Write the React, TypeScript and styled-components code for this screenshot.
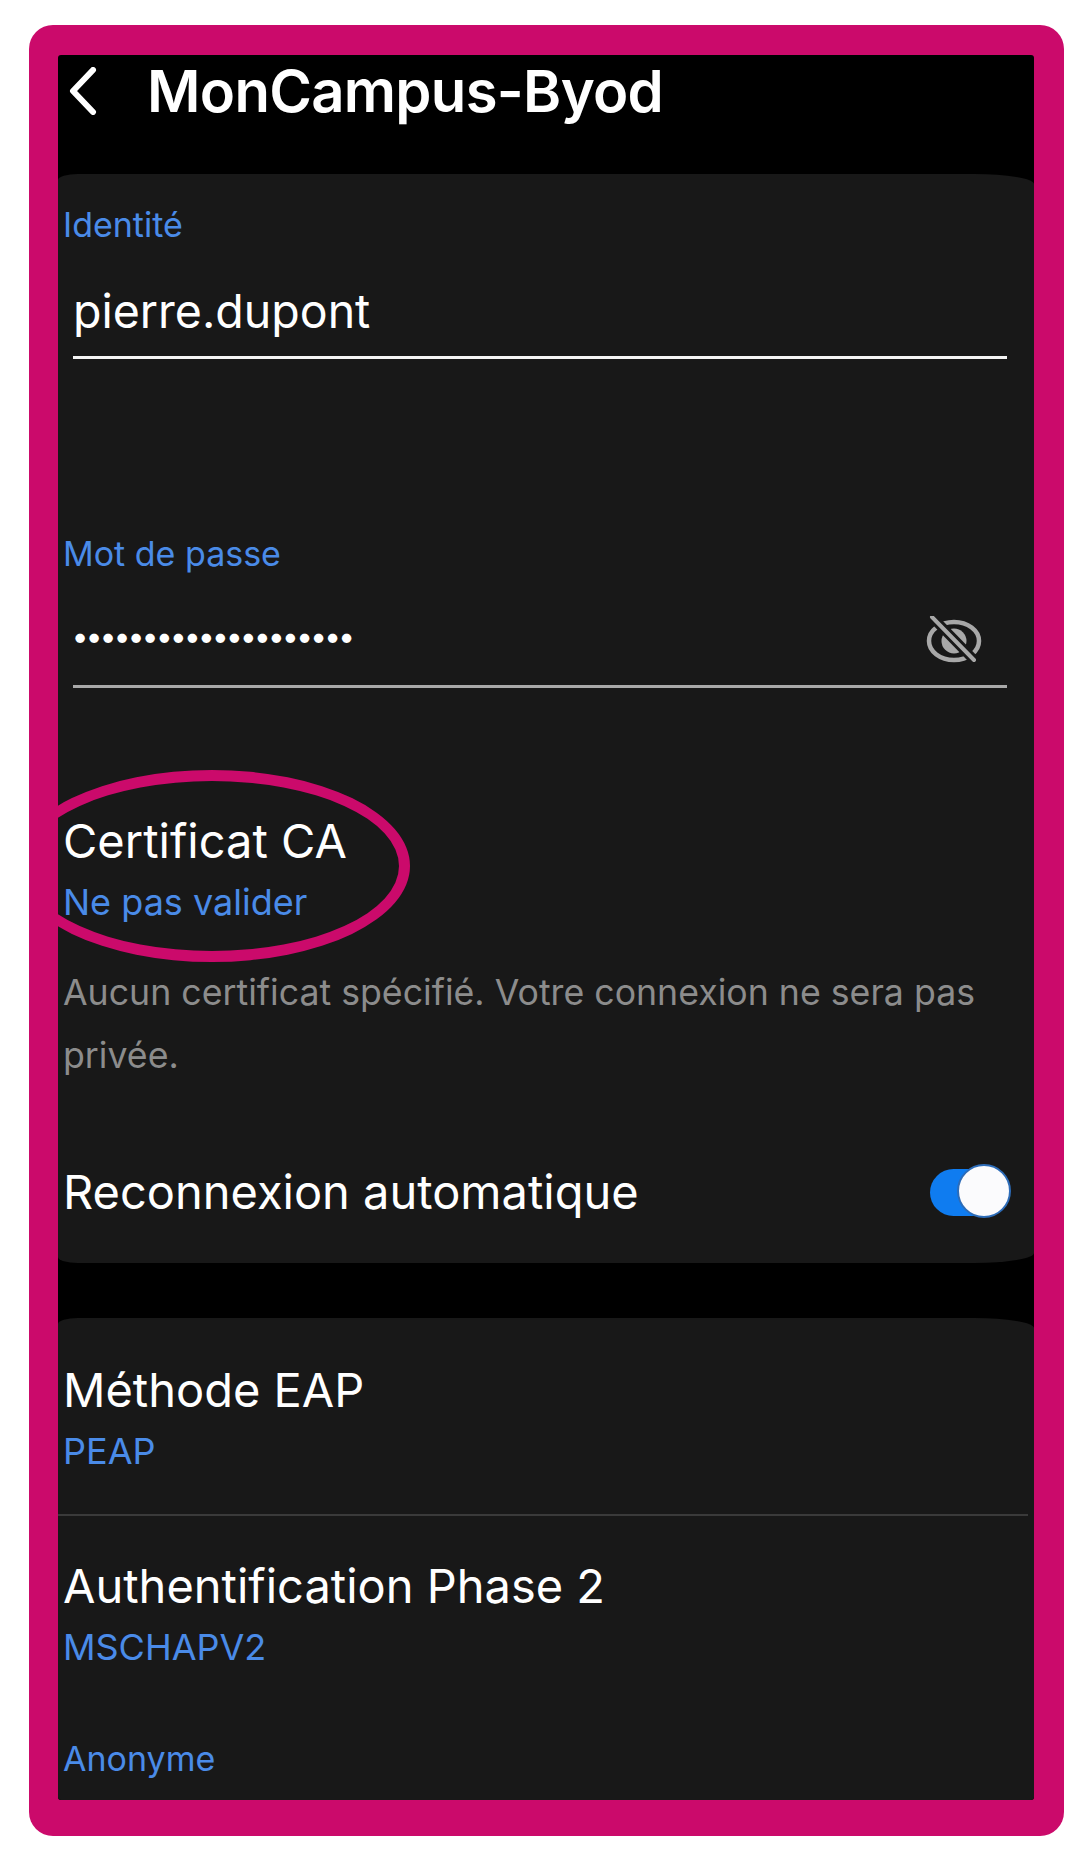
import styled, { createGlobalStyle } from "styled-components";

const GlobalStyle = createGlobalStyle`
  html, body {
    margin: 0;
    padding: 0;
    background: #ffffff;
  }
`;

const Page = styled.div`
  width: 1078px;
  height: 1859px;
  padding: 25px 14px 23px 29px;
  box-sizing: border-box;
`;

const Frame = styled.div`
  height: 100%;
  box-sizing: border-box;
  padding: 30px 30px 36px 29px;
  background: #cb0a6b;
  border-radius: 24px;
`;

const Screen = styled.div`
  position: relative;
  height: 100%;
  overflow: hidden;
  background: #000000;
  border-radius: 3px;
  font-family: Inter, Roboto, "Liberation Sans", sans-serif;
  color: #ffffff;
`;

const Header = styled.header`
  height: 119px;
  display: flex;
  align-items: flex-start;
  padding: 6px 0 0 10px;
  box-sizing: border-box;
`;

const BackIcon = styled.svg`
  width: 30px;
  height: 48px;
  margin-top: 6px;
  flex: none;
`;

const Title = styled.h1`
  margin: 0 0 0 49px;
  font-size: 58px;
  line-height: 60px;
  font-weight: 600;
  letter-spacing: -0.7px;
  white-space: nowrap;
`;

const Card = styled.section<{ $height: number }>`
  height: ${(p) => p.$height}px;
  box-sizing: border-box;
  background: #181818;
  border-radius: 20px 60px 60px 20px / 6px 10px 10px 6px;
  padding-left: 5px;
  overflow: hidden;
`;

const Gap = styled.div`
  height: 55px;
`;

const Label = styled.div<{ $top: number }>`
  margin-top: ${(p) => p.$top}px;
  height: 40px;
  font-size: 34px;
  line-height: 40px;
  color: #4a8be8;
`;

const InputRow = styled.div<{ $muted?: boolean }>`
  margin: 20px 27px 0 10px;
  height: 91px;
  display: flex;
  align-items: center;
  justify-content: space-between;
  border-bottom: 3px solid ${(p) => (p.$muted ? "#a8a8a8" : "#f4f4f4")};
  font-size: 46.5px;
  line-height: 56px;
`;

const Dots = styled.span`
  font-size: 30px;
  font-weight: 700;
  letter-spacing: -0.2px;
  margin-top: -8px;
`;

const EyeIcon = styled.svg`
  width: 56px;
  height: 48px;
  margin: 0 25px 0 0;
  flex: none;
`;

const Setting = styled.div<{ $top: number }>`
  margin-top: ${(p) => p.$top}px;
`;

const SettingName = styled.div`
  font-size: 47px;
  line-height: 56px;
`;

const SettingValue = styled.div`
  font-size: 36px;
  line-height: 44px;
  margin-top: 11px;
  color: #4a8be8;
`;

const Hint = styled.p`
  margin: 37px 25px 0 0;
  font-size: 35.7px;
  line-height: 63px;
  color: #8c8c8c;
`;

const ToggleRow = styled.div`
  margin: 77px 23px 0 0;
  display: flex;
  align-items: center;
  justify-content: space-between;
  font-size: 47px;
  line-height: 56px;
`;

const Track = styled.div`
  position: relative;
  width: 70px;
  height: 47px;
  margin-right: 11px;
  background: #0f7cf0;
  border-radius: 24px;
`;

const Knob = styled.div`
  position: absolute;
  top: -5px;
  right: -11px;
  width: 50px;
  height: 50px;
  background: #fbfbfd;
  border: 2px solid #2d6cb8;
  border-radius: 50%;
`;

const Divider = styled.hr`
  margin: 41px 6px 0 -5px;
  border: 0;
  height: 2px;
  background: #3a3a3a;
`;

const Highlight = styled.div`
  position: absolute;
  left: -44px;
  top: 715px;
  width: 396px;
  height: 192px;
  box-sizing: border-box;
  border: 11px solid #cb0a6b;
  border-radius: 50%;
  pointer-events: none;
`;

export default function App() {
  return (
    <>
      <GlobalStyle />
      <Page>
        <Frame>
          <Screen>
            <Header>
              <BackIcon viewBox="0 0 30 48" fill="none">
                <path
                  d="M25 3 L5 24 L25 45"
                  stroke="#ffffff"
                  strokeWidth="6"
                  strokeLinecap="round"
                  strokeLinejoin="round"
                />
              </BackIcon>
              <Title>MonCampus-Byod</Title>
            </Header>
            <Card $height={1089}>
              <Label $top={31}>Identité</Label>
              <InputRow>pierre.dupont</InputRow>
              <Label $top={175}>Mot de passe</Label>
              <InputRow $muted>
                <Dots>••••••••••••••••••••</Dots>
                <EyeIcon viewBox="0 0 56 48" fill="none">
                  <ellipse cx="28" cy="25" rx="25" ry="19" stroke="#a8a8a8" strokeWidth="4.5" />
                  <circle cx="28" cy="25" r="12.5" fill="#a8a8a8" />
                  <path d="M8 3 L50 46" stroke="#181818" strokeWidth="10" />
                  <path d="M6 1 L48 44" stroke="#a8a8a8" strokeWidth="4" strokeLinecap="round" />
                </EyeIcon>
              </InputRow>
              <Setting $top={125}>
                <SettingName>Certificat CA</SettingName>
                <SettingValue>Ne pas valider</SettingValue>
              </Setting>
              <Hint>Aucun certificat spécifié. Votre connexion ne sera pas privée.</Hint>
              <ToggleRow>
                Reconnexion automatique
                <Track>
                  <Knob />
                </Track>
              </ToggleRow>
            </Card>
            <Gap />
            <Card $height={500}>
              <Setting $top={44}>
                <SettingName>Méthode EAP</SettingName>
                <SettingValue>PEAP</SettingValue>
              </Setting>
              <Divider />
              <Setting $top={42}>
                <SettingName>Authentification Phase 2</SettingName>
                <SettingValue>MSCHAPV2</SettingValue>
              </Setting>
              <Label $top={70}>Anonyme</Label>
            </Card>
            <Highlight />
          </Screen>
        </Frame>
      </Page>
    </>
  );
}
